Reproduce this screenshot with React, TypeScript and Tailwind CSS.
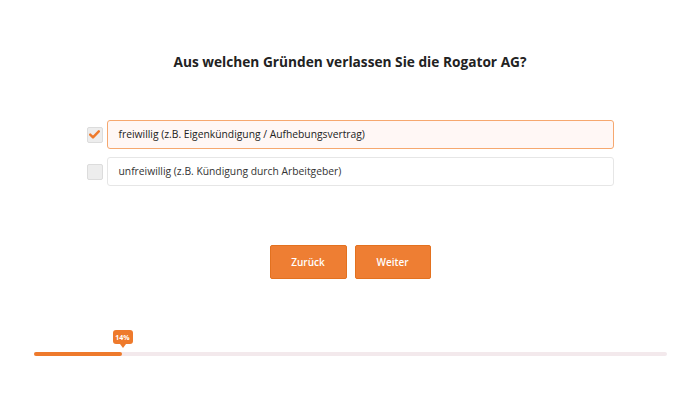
import { useState } from "react";

const options = [
  "freiwillig (z.B. Eigenkündigung / Aufhebungsvertrag)",
  "unfreiwillig (z.B. Kündigung durch Arbeitgeber)",
];

export default function App() {
  const [selected, setSelected] = useState(0);
  const progress = 14;

  return (
    <div
      className="w-[700px] h-[400px] bg-white flex flex-col items-center"
      style={{ fontFamily: '"Open Sans", "Liberation Sans", sans-serif' }}
    >
      {/* Question */}
      <h1 className="mt-[51px] text-[13.7px] leading-[22px] font-bold text-[#222]">
        Aus welchen Gründen verlassen Sie die Rogator AG?
      </h1>

      {/* Answers */}
      <div className="mt-[47px] w-[527px] flex flex-col gap-[8px]">
        {options.map((label, i) => {
          const active = selected === i;
          return (
            <div
              key={i}
              className="flex items-center gap-[4px] cursor-pointer"
              onClick={() => setSelected(i)}
            >
              <div className="w-[16px] h-[16px] rounded-[2px] border border-[#dcdcdc] bg-[#ededed] flex items-center justify-center shrink-0">
                {active && (
                  <svg width="11" height="9" viewBox="0 0 11 9">
                    <path
                      d="M1.2 4.6 L4 7.4 L9.8 1.3"
                      fill="none"
                      stroke="#ee7a2c"
                      strokeWidth="2.4"
                      strokeLinecap="round"
                      strokeLinejoin="round"
                    />
                  </svg>
                )}
              </div>
              <div
                className={
                  active
                    ? "flex-1 h-[29px] flex items-center px-[11px] rounded-[3px] border-[1.5px] border-[#f6a86f] bg-[#fff7f5] text-[10.3px] text-[#222]"
                    : "flex-1 h-[29px] flex items-center px-[11px] rounded-[3px] border border-[#e6e6e6] bg-white text-[10.3px] text-[#333]"
                }
              >
                {label}
              </div>
            </div>
          );
        })}
      </div>

      {/* Navigation */}
      <div className="mt-[59px] flex gap-[8px]">
        <button className="w-[77px] h-[34px] rounded-[2px] bg-[#ee7e33] border border-[#e3711f] text-white text-[10px] font-semibold">
          Zurück
        </button>
        <button className="w-[76px] h-[34px] rounded-[2px] bg-[#ee7e33] border border-[#e3711f] text-white text-[10px] font-semibold">
          Weiter
        </button>
      </div>

      {/* Progress */}
      <div className="mt-[73px] w-[633px] relative">
        <div className="h-[4px] rounded-full bg-[#f3e9ec]">
          <div
            className="h-full rounded-full bg-[#ee7a2c]"
            style={{ width: `${progress}%` }}
          />
        </div>
        <div className="absolute left-[79px] top-[-22px] flex flex-col items-center">
          <div className="w-[20px] h-[14px] rounded-[3px] bg-[#ee7a2c] text-white text-[7px] font-bold flex items-center justify-center leading-none">
            {progress}%
          </div>
          <div className="w-0 h-0 border-l-[3px] border-r-[3px] border-t-[4px] border-l-transparent border-r-transparent border-t-[#ee7a2c]" />
        </div>
      </div>
    </div>
  );
}
